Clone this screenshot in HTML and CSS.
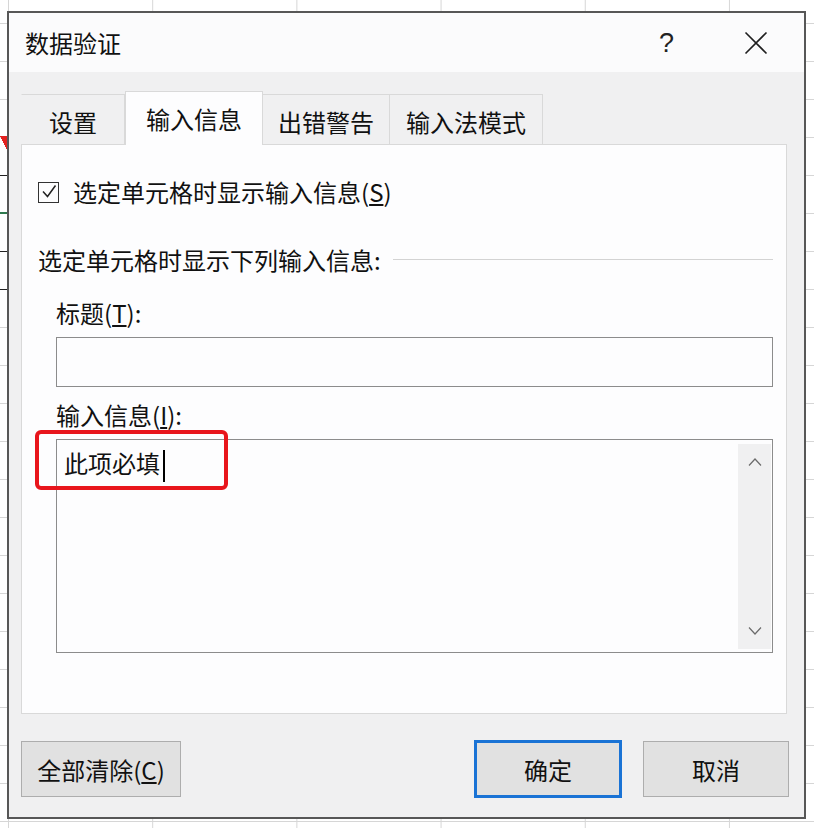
FILE: index.html
```html
<!doctype html>
<html lang="zh-CN">
<head>
    <meta charset="UTF-8">
    <title>数据验证</title>
    <link rel="stylesheet" href="styles.css">
</head>
<body>
    <div class="sheet">
        <div class="edge"></div>

        <div class="dialog">
            <div class="titlebar">
                <span class="title">数据验证</span>
                <span class="help">?</span>
                <span class="close">
                    <svg width="24" height="24" viewBox="0 0 24 24">
                        <path d="M1.5 1.5 L22.5 22.5 M22.5 1.5 L1.5 22.5" stroke="#1f1f1f" stroke-width="1.6" fill="none"/>
                    </svg>
                </span>
            </div>

            <div class="dialog-body">
                <div class="tabs">
                    <div class="tab tab-first">设置</div>
                    <div class="tab active">输入信息</div>
                    <div class="tab">出错警告</div>
                    <div class="tab tab-last">输入法模式</div>
                </div>

                <div class="panel">
                    <div class="check-row">
                        <span class="checkbox">
                            <svg width="18" height="18" viewBox="0 0 18 18">
                                <path d="M3 8.5 L7.5 13.5 L15.5 2.5" stroke="#222" stroke-width="1.5" fill="none"/>
                            </svg>
                        </span>
                        <span>选定单元格时显示输入信息(<u>S</u>)</span>
                    </div>

                    <div class="group-label">
                        <span>选定单元格时显示下列输入信息:</span>
                        <span class="rule"></span>
                    </div>

                    <div class="group">
                        <div class="field-label">标题(<u>T</u>):</div>
                        <div class="text-input"></div>

                        <div class="field-label field-label-2">输入信息(<u>I</u>):</div>
                        <div class="text-area">
                            <div class="text-content">此项必填<span class="caret"></span></div>
                            <div class="scrollbar">
                                <svg width="14" height="8" viewBox="0 0 14 8">
                                    <path d="M1 7.5 L7 1 L13 7.5" stroke="#6b6b6b" stroke-width="1.2" fill="none"/>
                                </svg>
                                <svg width="14" height="8" viewBox="0 0 14 8">
                                    <path d="M1 0.5 L7 7 L13 0.5" stroke="#6b6b6b" stroke-width="1.2" fill="none"/>
                                </svg>
                            </div>
                            <div class="highlight"></div>
                        </div>
                    </div>
                </div>

                <div class="buttons">
                    <button class="btn btn-clear">全部清除(<u>C</u>)</button>
                    <button class="btn btn-ok">确定</button>
                    <button class="btn btn-cancel">取消</button>
                </div>
            </div>
        </div>
    </div>
</body>
</html>
```

FILE: styles.css
```css
body {
    margin: 0;
    padding: 0;
    height: 828px;
    overflow: hidden;
    font-family: "Noto Sans CJK SC", "Noto Sans", sans-serif;
    color: #111;
    background-color: #fff;
    background-image:
        linear-gradient(to right, #d6d6d6 1px, transparent 1px),
        linear-gradient(to bottom, #d6d6d6 1px, transparent 1px);
    background-size: 144.2px 100%, 100% 38px;
    background-position: 8px 0, 0 23px;
}

.sheet {
    display: flex;
    height: 828px;
}

/* cells peeking out on the left of the dialog */
.edge {
    width: 7px;
    flex: none;
    background-image:
        linear-gradient(to bottom left, #e3211f 50%, transparent 50%),
        linear-gradient(#222, #222),
        linear-gradient(#2f7a4e, #2f7a4e),
        linear-gradient(#222, #222),
        linear-gradient(#222, #222);
    background-repeat: no-repeat;
    background-size: 7px 14px, 7px 1px, 7px 2px, 7px 1px, 7px 1px;
    background-position: 0 136px, 0 175px, 0 212px, 0 251px, 0 289px;
}

.dialog {
    margin-top: 11px;
    width: 799px;
    align-self: flex-start;
    box-sizing: border-box;
    border: 2px solid #575757;
    background: #f0f0f1;
}

.titlebar {
    height: 59px;
    display: flex;
    align-items: center;
    padding: 0 36px 0 16px;
    background: #fbfbfc;
}

.title {
    font-size: 24px;
    line-height: 30px;
}

.help {
    margin-left: auto;
    font-family: "Liberation Sans", sans-serif;
    font-size: 27px;
    line-height: 30px;
    color: #222;
}

.close {
    display: flex;
    margin-left: 70px;
}

.dialog-body {
    padding: 19px 15px 19px 12px;
}

.tabs {
    display: flex;
    align-items: flex-end;
}

.tab {
    height: 50px;
    box-sizing: border-box;
    padding: 4px 15px 0;
    line-height: 46px;
    font-size: 24px;
    border: 1px solid #d9d9d9;
    border-bottom: none;
    border-left: none;
    background: #f0f0f1;
}

.tab-first {
    padding: 4px 27px 0;
    border-left: 1px solid transparent;
}

.tab-last {
    padding: 4px 16px 0;
}

.tab.active {
    position: relative;
    z-index: 1;
    height: 54px;
    margin-bottom: -1px;
    padding: 1px 20px 0;
    line-height: 52px;
    border-left: 1px solid #d9d9d9;
    background: #fdfdfe;
}

.panel {
    height: 570px;
    box-sizing: border-box;
    margin-right: 2px;
    padding: 0 13px 0 16px;
    border: 1px solid #d9d9d9;
    background: #fdfdfe;
    font-size: 24px;
}

.check-row {
    margin-top: 32px;
    display: flex;
    align-items: center;
    gap: 14px;
    line-height: 30px;
}

.checkbox {
    flex: none;
    width: 21px;
    height: 21px;
    box-sizing: border-box;
    border: 1.5px solid #333;
    display: flex;
    align-items: center;
    justify-content: center;
}

.checkbox svg {
    flex: none;
}

.group-label {
    margin-top: 38px;
    display: flex;
    align-items: center;
    line-height: 30px;
}

.rule {
    flex: 1;
    height: 1px;
    margin: -2px 0 0 12px;
    background: #d3d3d3;
}

.group {
    padding-left: 18px;
}

.field-label {
    margin-top: 23px;
    line-height: 30px;
}

.field-label-2 {
    margin-top: 13px;
}

.text-input {
    margin-top: 9px;
    height: 50px;
    box-sizing: border-box;
    border: 1px solid #8c8c8c;
    background: #fdfdfe;
}

.text-area {
    position: relative;
    margin-top: 9px;
    height: 214px;
    box-sizing: border-box;
    border: 1px solid #8c8c8c;
    display: flex;
}

.text-content {
    flex: 1;
    padding: 8px 0 0 7px;
    line-height: 30px;
}

.caret {
    display: inline-block;
    width: 2px;
    height: 32px;
    margin-left: 3px;
    vertical-align: middle;
    background: #000;
}

.scrollbar {
    width: 33px;
    margin: 4px 1px 3px 0;
    padding: 14px 0;
    box-sizing: border-box;
    background: #f0f0f1;
    display: flex;
    flex-direction: column;
    justify-content: space-between;
    align-items: center;
}

/* red annotation around the typed text */
.highlight {
    position: absolute;
    left: -22px;
    top: -10px;
    width: 193px;
    height: 60px;
    box-sizing: border-box;
    border: 4px solid #e8151c;
    border-radius: 6px;
}

.buttons {
    margin-top: 26px;
    height: 58px;
    display: flex;
    align-items: center;
}

.btn {
    height: 56px;
    font-family: "Noto Sans CJK SC", "Noto Sans", sans-serif;
    font-size: 24px;
    color: #111;
    background: #e1e1e1;
    border: 1px solid #adadad;
    padding: 0;
}

.btn u {
    text-decoration: underline;
}

.btn-clear {
    width: 160px;
}

.btn-ok {
    width: 148px;
    height: 58px;
    margin-left: auto;
    border: 3px solid #1a73d5;
}

.btn-cancel {
    width: 146px;
    margin-left: 21px;
}
```
